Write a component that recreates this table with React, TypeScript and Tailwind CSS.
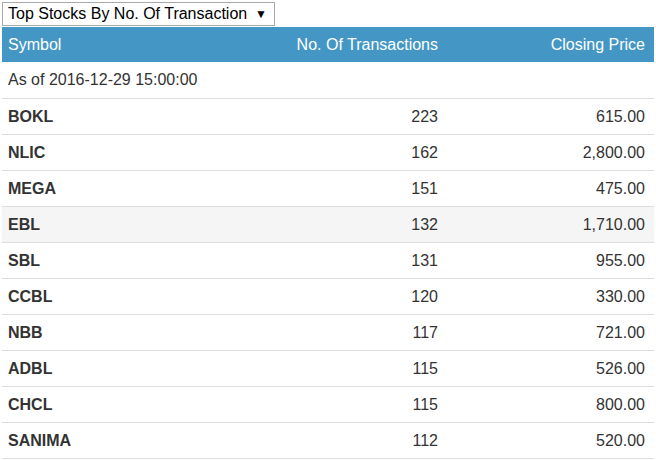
import React from "react";

const rows = [
  { symbol: "BOKL", tx: "223", price: "615.00" },
  { symbol: "NLIC", tx: "162", price: "2,800.00" },
  { symbol: "MEGA", tx: "151", price: "475.00" },
  { symbol: "EBL", tx: "132", price: "1,710.00", hover: true },
  { symbol: "SBL", tx: "131", price: "955.00" },
  { symbol: "CCBL", tx: "120", price: "330.00" },
  { symbol: "NBB", tx: "117", price: "721.00" },
  { symbol: "ADBL", tx: "115", price: "526.00" },
  { symbol: "CHCL", tx: "115", price: "800.00" },
  { symbol: "SANIMA", tx: "112", price: "520.00" },
];

export default function App() {
  return (
    <div className="w-[656px] h-[460px] bg-white font-['Liberation_Sans',Arial,sans-serif] text-[16px] text-[#333]">
      <div className="pt-[2px] pl-[2px]">
        <div className="w-[273px] h-[24px] border border-[#a9a9a9] flex flex-row items-center justify-between pl-[5px] pr-[7px] text-black whitespace-nowrap">
          <span>Top Stocks By No. Of Transaction</span>
          <span className="text-[12px]">▼</span>
        </div>
      </div>
      <div className="ml-[2px] mt-[1px] w-[652px] whitespace-nowrap">
        <div className="grid grid-cols-[270px_174px_208px] h-[35px] items-center bg-[#4497c5] text-white">
          <div className="pl-[6px]">Symbol</div>
          <div className="pr-2 text-right">No. Of Transactions</div>
          <div className="pr-[9px] text-right">Closing Price</div>
        </div>
        <div className="h-[36px] flex items-center pl-[6px]">As of 2016-12-29 15:00:00</div>
        <div className="border-b border-[#ddd]">
          {rows.map((r) => (
            <div
              key={r.symbol}
              className={
                "grid grid-cols-[270px_174px_208px] h-[36px] items-center border-t border-[#ddd] " +
                (r.hover ? "bg-[#f5f5f5]" : "")
              }
            >
              <div className="pl-[6px] font-bold">{r.symbol}</div>
              <div className="pr-2 text-right">{r.tx}</div>
              <div className="pr-[9px] text-right">{r.price}</div>
            </div>
          ))}
        </div>
      </div>
    </div>
  );
}
